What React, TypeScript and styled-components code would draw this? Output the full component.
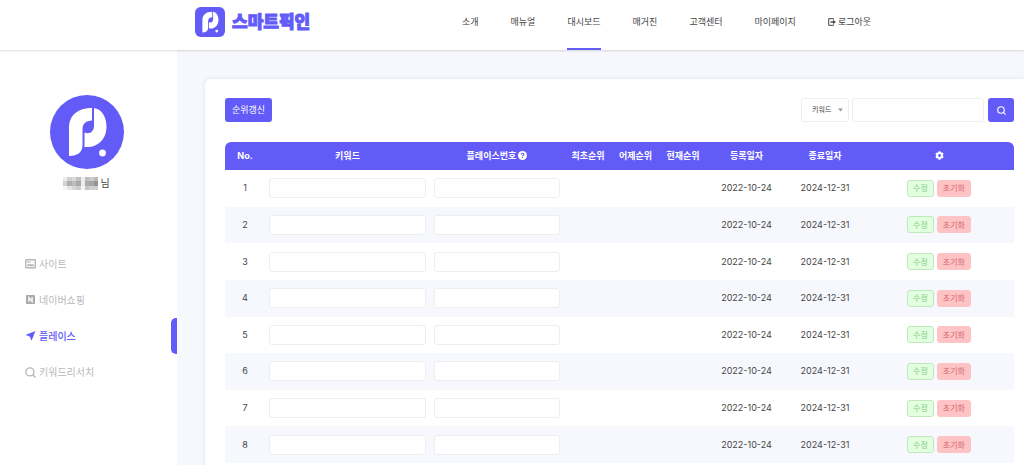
import React from "react";
import styled, { createGlobalStyle, css } from "styled-components";

const PRIMARY = "#625bf8";

const GlobalStyle = createGlobalStyle`
  * { box-sizing: border-box; }
  body {
    margin: 0;
    background: #f7f8fe;
    color: #444;
    font-family: Inter, "Noto Sans CJK KR", sans-serif;
    font-size: 9px;
    line-height: 14px;
  }
  button, input, select { font: inherit; color: inherit; margin: 0; }
  a { color: inherit; text-decoration: none; }
`;

const Page = styled.div`
  display: flex;
  flex-direction: column;
  height: 100vh;
  overflow: hidden;
`;

const Header = styled.header`
  display: flex;
  flex: none;
  align-items: stretch;
  height: 50px;
  padding-left: 195px;
  background: #fff;
  box-shadow: 0 1px 2px rgba(0, 0, 0, 0.14);
  z-index: 1;
`;

const Brand = styled.a`
  display: flex;
  align-items: center;
  gap: 7px;
  width: 267px;
  padding-bottom: 6px;
  color: ${PRIMARY};
  font-size: 17px;
  line-height: 24px;
  font-weight: 900;
  -webkit-text-stroke: 1px ${PRIMARY};
`;

const Nav = styled.nav`
  display: flex;
  gap: 32px;
`;

const NavLink = styled.a<{ $active?: boolean }>`
  display: flex;
  align-items: center;
  gap: 2px;
  padding-bottom: 4px;
  border-bottom: 2px solid ${(p) => (p.$active ? PRIMARY : "transparent")};
`;

const Body = styled.div`
  display: flex;
  flex: 1;
  min-height: 0;
`;

const Sidebar = styled.aside`
  flex: none;
  width: 177px;
  padding-top: 45px;
  background: #fff;
`;

const Profile = styled.div`
  display: flex;
  flex-direction: column;
  align-items: center;
  gap: 7px;
  padding-right: 4px;
`;

const UserName = styled.div`
  display: flex;
  align-items: center;
  gap: 2px;
  font-size: 10px;
`;

const Menu = styled.nav`
  display: flex;
  flex-direction: column;
  margin-top: 56px;
`;

const MenuLink = styled.a<{ $active?: boolean }>`
  display: flex;
  align-items: center;
  gap: 3px;
  height: 36px;
  padding-left: 25px;
  color: #b8b8b8;
  font-size: 10px;
  ${(p) =>
    p.$active &&
    css`
      color: ${PRIMARY};
      font-weight: 500;
      &::after {
        content: "";
        width: 6px;
        height: 36px;
        margin-left: auto;
        border-radius: 5px 0 0 5px;
        background: ${PRIMARY};
      }
    `}
`;

const Main = styled.main`
  flex: 1;
  min-width: 0;
  padding: 29px 0 0 28px;
`;

const Card = styled.section`
  min-height: 100%;
  padding: 19px 10px 20px 20px;
  border-radius: 6px 0 0 0;
  background: #fff;
  box-shadow: 0 0 4px rgba(60, 60, 120, 0.12);
`;

const Toolbar = styled.div`
  display: flex;
  justify-content: space-between;
  margin-bottom: 20px;
`;

const SearchForm = styled.form`
  display: flex;
  gap: 3px;
`;

const PrimaryButton = styled.button`
  display: flex;
  align-items: center;
  justify-content: center;
  height: 24px;
  padding: 0 7px;
  border: 0;
  border-radius: 3px;
  background: ${PRIMARY};
  color: #fff;
`;

const SearchButton = styled(PrimaryButton)`
  width: 26px;
  margin-left: 1px;
  padding: 0;
`;

const SelectBox = styled.label`
  display: grid;
  align-items: center;
  width: 48px;
  height: 24px;

  select, svg { grid-area: 1 / 1; }
  svg { justify-self: end; margin-right: 6px; pointer-events: none; }
`;

const Select = styled.select`
  appearance: none;
  width: 100%;
  height: 24px;
  padding: 0 0 0 10px;
  border: 1px solid #eee;
  border-radius: 3px;
  background: #fff;
  font-size: 7px;
`;

const TextInput = styled.input`
  display: block;
  width: 100%;
  height: 20px;
  padding: 0 6px;
  border: 1px solid #eeeef0;
  border-radius: 3px;
  background: #fff;
`;

const SearchInput = styled(TextInput)`
  width: 132px;
  height: 24px;
`;

const Table = styled.table`
  width: 100%;
  height: 321px;
  border-collapse: separate;
  border-spacing: 0;
  table-layout: fixed;
  text-align: center;
`;

const Col = styled.col<{ $width?: number }>`
  width: ${(p) => (p.$width ? `${p.$width}px` : "auto")};
`;

const HeadRow = styled.tr`
  height: 28px;
`;

const HeadCell = styled.th`
  padding: 0;
  background: ${PRIMARY};
  color: #fff;
  font-weight: 700;
  &:first-child { border-top-left-radius: 6px; }
  &:last-child { border-top-right-radius: 6px; }
  svg { vertical-align: -1px; }
`;

const Row = styled.tr`
  &:nth-child(even) { background: #f7f8fe; }
`;

const Cell = styled.td`
  padding: 0 4px;
`;

const Actions = styled.div`
  display: flex;
  justify-content: center;
  gap: 3px;
`;

const ActionButton = styled.button<{ $tone: "green" | "red" }>`
  height: 17px;
  padding: 0 5px;
  border: 1px solid ${(p) => (p.$tone === "green" ? "#bfe9bd" : "#fdc3c5")};
  border-radius: 3px;
  background: ${(p) => (p.$tone === "green" ? "#e2ffdf" : "#fdc3c5")};
  color: ${(p) => (p.$tone === "green" ? "#86cc84" : "#d8696e")};
  font-size: 8px;
  line-height: 12px;
`;

const PMark = () => (
  <>
    <path d="M19 61V33C19 20 28 13 42 13V25.500C36 25.500 32.500 29 32.500 34V50C32.500 57 28 61 19 61Z" fill="#fff" />
    <path d="M44 13C51 14 56.500 21 56.500 32C56.500 44 48 52 38 52H34.500V37.500C39 39.500 44 37 44 31Z" fill="#fff" />
    <circle cx="52.500" cy="58" r="3.400" fill="#fff" />
  </>
);

const BrandLogo = () => (
  <svg width="30" height="30" viewBox="0 0 74 74" aria-hidden="true">
    <rect width="74" height="74" rx="14" fill={PRIMARY} />
    <g transform="translate(-2 -2) scale(1.06)">
      <PMark />
    </g>
  </svg>
);

const Avatar = () => (
  <svg width="74" height="74" viewBox="0 0 74 74" aria-hidden="true">
    <circle cx="37" cy="37" r="37" fill={PRIMARY} />
    <PMark />
  </svg>
);

const MASK = [
  ["#ededed", "#d0d0d0", "#dadada", "#c2c2c2", "#eeeeee", "#bcbcbc", "#cdcdcd", "#b9b9b9"],
  ["#d2d2d2", "#aeaeae", "#bdbdbd", "#aaaaaa", "#ececec", "#acacac", "#a6a6a6", "#959595"],
  ["#f6f6f6", "#e6e6e6", "#d8d8d8", "#cdcdcd", "#f5f5f5", "#c4c4c4", "#d0d0d0", "#cdcdcd"],
];

const MaskedName = () => (
  <svg width="35" height="13" viewBox="0 0 32 12" preserveAspectRatio="none" shapeRendering="crispEdges" aria-hidden="true">
    {MASK.map((row, y) =>
      row.map((fill, x) => <rect key={`${x}-${y}`} x={x * 4} y={y * 4} width="4" height="4" fill={fill} />)
    )}
  </svg>
);

const SiteIcon = () => (
  <svg width="11" height="10" viewBox="0 0 11 10" fill="none" stroke="currentColor" aria-hidden="true">
    <rect x="0.700" y="0.700" width="9.600" height="8.100" rx="0.600" strokeWidth="1.400" />
    <path d="M2 3H5.500" strokeWidth="1.200" />
    <path d="M2.300 6.200H8.700" strokeWidth="2" />
  </svg>
);

const ShopIcon = () => (
  <svg width="11" height="10" viewBox="0 0 11 10" aria-hidden="true">
    <rect x="1" width="9" height="9" rx="0.800" fill="#aaa" />
    <path d="M3.900 7V2.500L7.100 6.500V2" fill="none" stroke="#fff" strokeWidth="1.300" />
  </svg>
);

const PlaceIcon = () => (
  <svg width="11" height="10" viewBox="0 0 11 10" fill="currentColor" aria-hidden="true">
    <path d="M10.400 0L6.600 9.800L4.800 5.600L0.500 4Z" />
  </svg>
);

const SearchIcon = ({ size }: { size: number }) => (
  <svg width={size} height={size} viewBox="0 0 11 11" fill="none" stroke="currentColor" strokeWidth="1.400" aria-hidden="true">
    <circle cx="4.900" cy="4.900" r="4" />
    <path d="M7.800 7.800L10.500 10.500" />
  </svg>
);

const LogoutIcon = () => (
  <svg width="8" height="8" viewBox="0 0 8 8" fill="none" stroke="currentColor" aria-hidden="true">
    <path d="M5.500 1.500V0.700H0.700V7.300H5.500V6.500" />
    <path d="M2.500 4H6" strokeWidth="1.400" />
    <path d="M5 1.900L8 4L5 6.100Z" fill="currentColor" stroke="none" />
  </svg>
);

const HelpIcon = () => (
  <svg width="9" height="9" viewBox="0 0 8 8" aria-hidden="true">
    <circle cx="4" cy="4" r="4" fill="#fff" />
    <path d="M2.900 3.100C2.900 1.600 5.200 1.700 5.200 3C5.200 3.900 4 3.900 4 4.700M4 5.400V6.300" fill="none" stroke={PRIMARY} />
  </svg>
);

const GearIcon = () => (
  <svg width="9" height="9" viewBox="0 0 16 16" fill="none" stroke="#fff" aria-hidden="true">
    <circle cx="8" cy="8" r="4.300" strokeWidth="3.600" />
    <path d="M8 0.500V3M8 13V15.500M1.500 4.200L3.700 5.500M12.300 10.500L14.500 11.800M1.500 11.800L3.700 10.500M12.300 5.500L14.500 4.200" strokeWidth="3.800" />
  </svg>
);

const NAV = ["소개", "매뉴얼", "대시보드", "매거진", "고객센터", "마이페이지"];

const MENU = [
  { label: "사이트", icon: <SiteIcon /> },
  { label: "네이버쇼핑", icon: <ShopIcon /> },
  { label: "플레이스", icon: <PlaceIcon />, active: true },
  { label: "키워드리서치", icon: <SearchIcon size={11} /> },
];

const COLUMNS = [40, 165, 134, 48, 47, 48, 79, 78, undefined];

const ROWS = [1, 2, 3, 4, 5, 6, 7, 8].map((no) => ({ no, start: "2022-10-24", end: "2024-12-31" }));

export default function App() {
  return (
    <Page>
      <GlobalStyle />
      <Header>
        <Brand href="#">
          <BrandLogo />
          스마트픽인
        </Brand>
        <Nav>
          {NAV.map((label) => (
            <NavLink key={label} href="#" $active={label === "대시보드"}>
              {label}
            </NavLink>
          ))}
          <NavLink href="#">
            <LogoutIcon />
            로그아웃
          </NavLink>
        </Nav>
      </Header>
      <Body>
        <Sidebar>
          <Profile>
            <Avatar />
            <UserName>
              <MaskedName />님
            </UserName>
          </Profile>
          <Menu>
            {MENU.map((item) => (
              <MenuLink key={item.label} href="#" $active={item.active}>
                {item.icon}
                {item.label}
              </MenuLink>
            ))}
          </Menu>
        </Sidebar>
        <Main>
          <Card>
            <Toolbar>
              <PrimaryButton type="button">순위갱신</PrimaryButton>
              <SearchForm onSubmit={(e) => e.preventDefault()}>
                <SelectBox>
                  <Select aria-label="검색 조건">
                    <option>키워드</option>
                  </Select>
                  <svg width="5" height="4" viewBox="0 0 5 4" aria-hidden="true">
                    <path d="M0 0.500H5L2.500 3.500Z" fill="#999" />
                  </svg>
                </SelectBox>
                <SearchInput type="text" aria-label="검색어" />
                <SearchButton type="submit" aria-label="검색">
                  <SearchIcon size={9} />
                </SearchButton>
              </SearchForm>
            </Toolbar>
            <Table>
              <colgroup>
                {COLUMNS.map((width, i) => (
                  <Col key={i} $width={width} />
                ))}
              </colgroup>
              <thead>
                <HeadRow>
                  <HeadCell>No.</HeadCell>
                  <HeadCell>키워드</HeadCell>
                  <HeadCell>
                    플레이스번호 <HelpIcon />
                  </HeadCell>
                  <HeadCell>최초순위</HeadCell>
                  <HeadCell>어제순위</HeadCell>
                  <HeadCell>현재순위</HeadCell>
                  <HeadCell>등록일자</HeadCell>
                  <HeadCell>종료일자</HeadCell>
                  <HeadCell aria-label="설정">
                    <GearIcon />
                  </HeadCell>
                </HeadRow>
              </thead>
              <tbody>
                {ROWS.map((row) => (
                  <Row key={row.no}>
                    <Cell>{row.no}</Cell>
                    <Cell>
                      <TextInput type="text" aria-label={`키워드 ${row.no}`} />
                    </Cell>
                    <Cell>
                      <TextInput type="text" aria-label={`플레이스번호 ${row.no}`} />
                    </Cell>
                    <Cell />
                    <Cell />
                    <Cell />
                    <Cell>{row.start}</Cell>
                    <Cell>{row.end}</Cell>
                    <Cell>
                      <Actions>
                        <ActionButton type="button" $tone="green">수정</ActionButton>
                        <ActionButton type="button" $tone="red">초기화</ActionButton>
                      </Actions>
                    </Cell>
                  </Row>
                ))}
              </tbody>
            </Table>
          </Card>
        </Main>
      </Body>
    </Page>
  );
}
